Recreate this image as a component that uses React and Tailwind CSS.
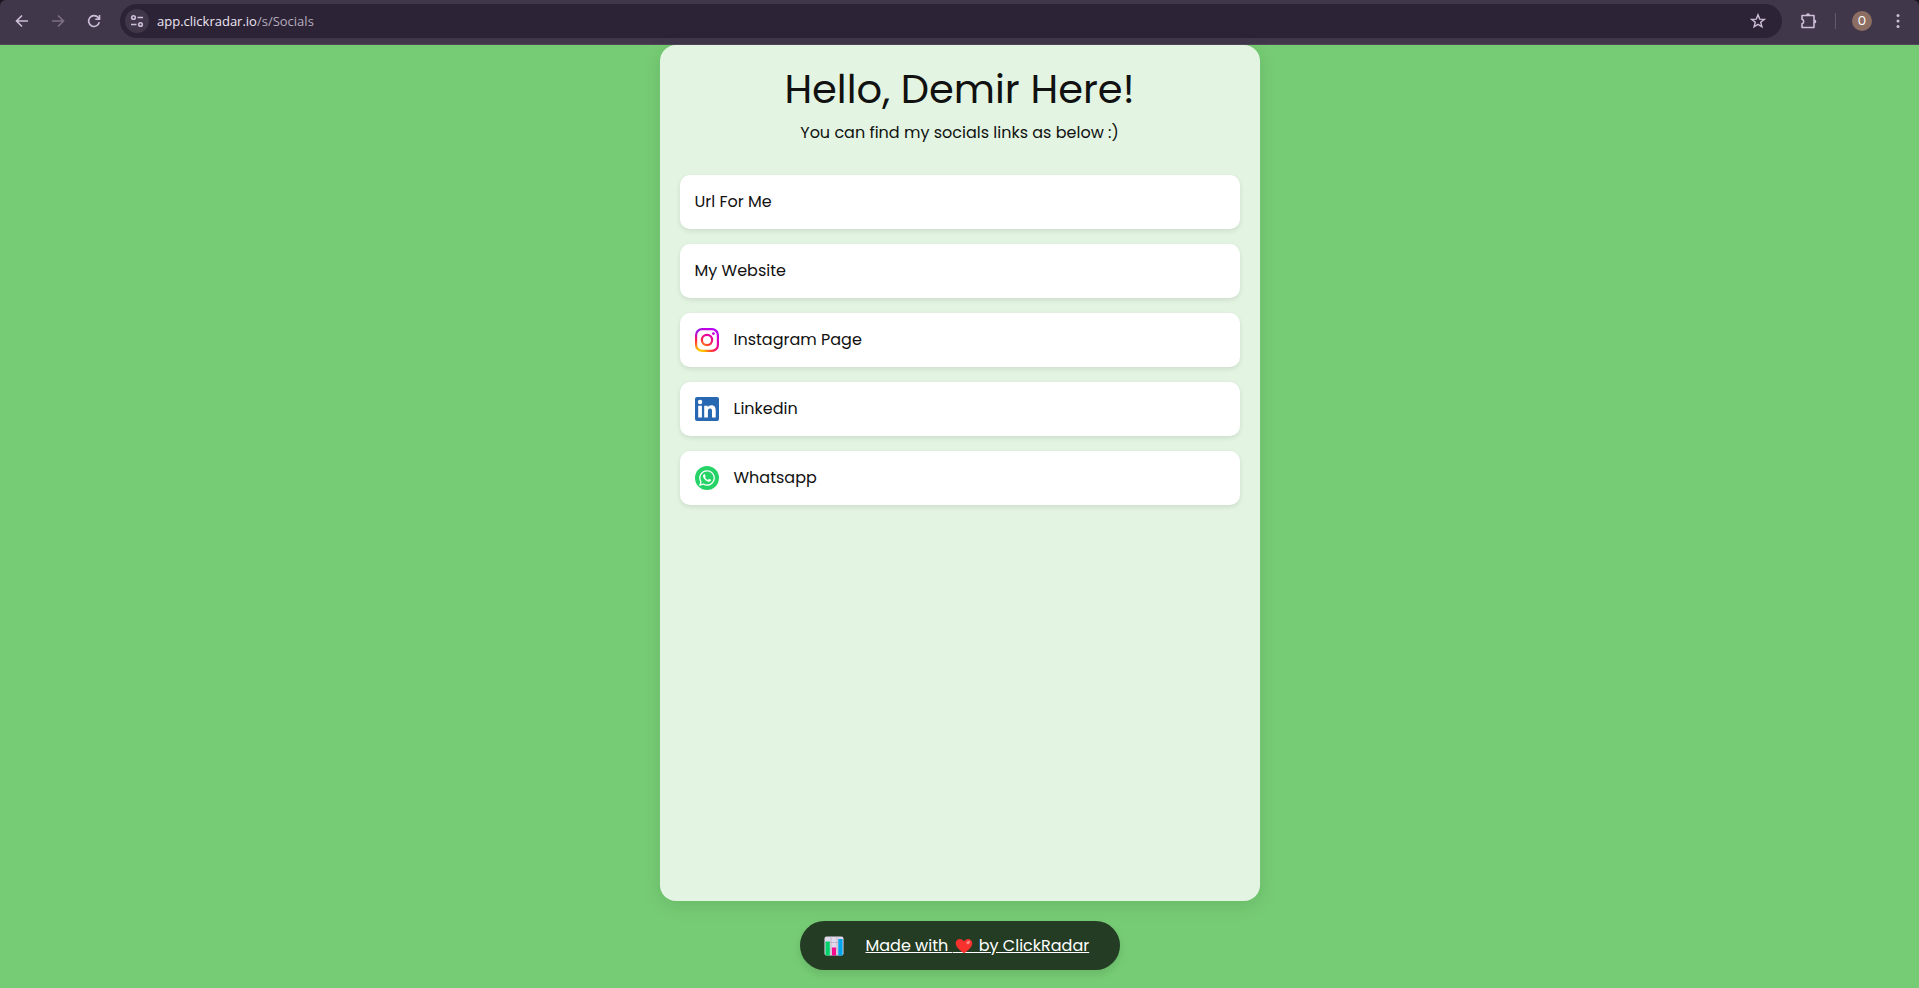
import { FaWhatsapp } from "react-icons/fa";

function InstagramIcon() {
  return (
    <svg viewBox="0 0 24 24" className="size-6 shrink-0" fill="none" aria-hidden="true">
      <defs>
        <radialGradient id="ig-warm" cx="0.2" cy="1.05" r="1.1">
          <stop offset="0" stopColor="#ffdd00" />
          <stop offset="0.18" stopColor="#ffb800" />
          <stop offset="0.5" stopColor="#ff2d3c" />
          <stop offset="0.75" stopColor="#e800a0" />
          <stop offset="1" stopColor="#b900f0" />
        </radialGradient>
        <radialGradient id="ig-cool" cx="0" cy="0" r="0.5">
          <stop offset="0" stopColor="#5a3cff" />
          <stop offset="1" stopColor="#b900f0" stopOpacity="0" />
        </radialGradient>
        <mask id="ig-shape">
          <rect x="1.1" y="1.1" width="21.8" height="21.8" rx="6" stroke="#fff" strokeWidth="2.2" />
          <circle cx="12" cy="12" r="5.1" stroke="#fff" strokeWidth="2.2" />
          <circle cx="18.4" cy="5.6" r="1.45" fill="#fff" />
        </mask>
      </defs>
      <g mask="url(#ig-shape)">
        <rect width="24" height="24" fill="url(#ig-warm)" />
        <rect width="24" height="24" fill="url(#ig-cool)" />
      </g>
    </svg>
  );
}

function LinkedinIcon() {
  return (
    <svg viewBox="0 0 24 24" className="size-6 shrink-0" aria-hidden="true">
      <rect width="24" height="24" rx="2" fill="#2867b2" />
      <circle cx="5.1" cy="5" r="2.2" fill="#fff" />
      <path
        fill="#fff"
        d="M3.2 8.7h3.7v11.8H3.2zM9.2 8.7h3.5v1.6c.6-1.1 1.9-2 3.6-2 3.7 0 4.4 2.4 4.4 5.6v6.6H17v-5.8c0-1.4 0-3.2-1.9-3.2s-2.2 1.5-2.2 3.1v5.9H9.2z"
      />
    </svg>
  );
}

function WhatsappIcon() {
  return (
    <span className="flex size-6 shrink-0 items-center justify-center rounded-full bg-[#25d366]">
      <FaWhatsapp className="size-[18px] text-white" aria-hidden="true" />
    </span>
  );
}

function ChartIcon() {
  return (
    <svg viewBox="0 0 20 20" className="size-5 shrink-0" aria-hidden="true">
      <rect x="0.5" y="0.5" width="19" height="19" rx="2" fill="#e1d8ec" />
      <path d="M0.5 6.5h19M0.5 13h19M7 .5v19M13 .5v19" stroke="#b4acbc" strokeWidth="0.7" />
      <rect x="1.5" y="5.5" width="4.3" height="14" fill="#00d26a" />
      <rect x="8" y="11.5" width="4" height="8" fill="#f70a8d" />
      <rect x="14.3" y="3" width="4.3" height="16.5" fill="#00a6ed" />
    </svg>
  );
}

function HeartIcon() {
  return (
    <svg viewBox="0 0 22 16" className="inline-block h-4 w-[22px] align-[-3px]" role="img" aria-label="love">
      <path d="M0 14.5h22" stroke="#fff" />
      <path
        fill="#f8312f"
        d="M11 15.2C8 13.200 2.700 9.500 2.700 5.200 2.700 2.800 4.600 1 6.900 1 8.700 1 10.200 2 11 3.400 11.800 2 13.300 1 15.100 1c2.300 0 4.200 1.800 4.200 4.200 0 4.300-5.300 8-8.300 10z"
      />
      <ellipse cx="15.300" cy="4.500" rx="2" ry="1.500" fill="#ff8687" transform="rotate(-35 15.300 4.500)" />
    </svg>
  );
}

const iconButton = "flex size-7 items-center justify-center rounded-full";
const stroke = { fill: "none", stroke: "currentColor", strokeWidth: 1.6 };

function BrowserBar() {
  return (
    <div className="bg-[#1c1622]">
      <header className="flex h-[45px] items-center rounded-t-md border-b border-[#52485a] bg-[#41374a] pb-0.5 pl-2 pr-[11px] text-[#cdbfd9]">
        <nav className="flex gap-2" aria-label="Browser">
          <button className={iconButton} aria-label="Back">
            <svg viewBox="0 0 16 16" className="size-4" {...stroke}>
              <path d="M14 8H3M8 2.5 2.5 8 8 13.5" />
            </svg>
          </button>
          <button className={iconButton + " text-[#7c7086]"} aria-label="Forward">
            <svg viewBox="0 0 16 16" className="size-4" {...stroke}>
              <path d="M2 8h11M8 2.5 13.5 8 8 13.5" />
            </svg>
          </button>
          <button className={iconButton} aria-label="Reload">
            <svg viewBox="0 0 16 16" className="size-4" {...stroke}>
              <path d="M13.3 9.2A5.4 5.4 0 1 1 12.2 4.6L13.5 6M13.5 2v4.200H9.300" />
            </svg>
          </button>
        </nav>
        <div className="ml-3 flex h-[34px] flex-1 items-center rounded-full bg-[#2c2336] pl-[5px] pr-4">
          <button className="flex size-6 items-center justify-center rounded-full bg-[#41374a]" aria-label="Site information">
            <svg viewBox="0 0 14 14" className="size-3.5" {...stroke}>
              <circle cx="3.5" cy="3.5" r="1.8" />
              <path d="M7.5 3.500H13M1 10.500h5.500" />
              <circle cx="10.5" cy="10.5" r="1.8" />
            </svg>
          </button>
          <p className="ml-2 flex-1 font-['Open_Sans',sans-serif] text-[13px] leading-5 text-[#b5adbd]">
            <span className="text-[#eee6f4]">app.clickradar.io</span>/s/Socials
          </p>
          <button aria-label="Bookmark this page">
            <svg viewBox="0 0 16 16" className="size-4" {...stroke} strokeWidth="1.4">
              <path d="m8 1.800 1.700 4.300 4.600.3-3.600 2.900 1.200 4.500L8 11.300l-3.900 2.500 1.200-4.500L1.700 6.400l4.600-.3z" />
            </svg>
          </button>
        </div>
        <div className="flex items-center">
          <button className="ml-[17px] flex size-5 items-center justify-center" aria-label="Extensions">
            <svg viewBox="0 0 18 18" className="size-[18px]" {...stroke}>
              <path d="M2 3.500h12v12H2v-3.700a2.400 2.400 0 0 0 0-4.600z" strokeLinejoin="round" />
              <path d="M6 3.200a2 2 0 0 1 4 0zM14.300 7.500a2 2 0 0 1 0 4z" fill="currentColor" stroke="none" />
            </svg>
          </button>
          <span className="ml-4 h-4 w-px bg-[#65596f]" />
          <button
            className="ml-4 flex size-5 items-center justify-center rounded-full bg-[#8d6e63] font-['Roboto',sans-serif] text-xs text-white"
            aria-label="Profile"
          >
            O
          </button>
          <button className="ml-4 flex size-5 items-center justify-center" aria-label="Menu">
            <svg viewBox="0 0 4 16" className="h-4 w-1" fill="currentColor">
              <circle cx="2" cy="2.5" r="1.5" />
              <circle cx="2" cy="8" r="1.5" />
              <circle cx="2" cy="13.5" r="1.5" />
            </svg>
          </button>
        </div>
      </header>
    </div>
  );
}

const links = [
  { label: "Url For Me" },
  { label: "My Website" },
  { label: "Instagram Page", Icon: InstagramIcon },
  { label: "Linkedin", Icon: LinkedinIcon },
  { label: "Whatsapp", Icon: WhatsappIcon },
];

export default function App() {
  return (
    <div className="flex min-h-screen flex-col bg-[#76cc74] font-['Poppins','Inter',sans-serif] text-[#111]">
      <BrowserBar />
      <main className="mx-auto flex w-full max-w-[600px] flex-1 flex-col rounded-2xl bg-[#e3f5e2] px-5 pt-5 shadow-[0_4px_20px_rgba(0,0,0,0.1)]">
        <h1 className="text-center text-[40px] leading-12">Hello, Demir Here!</h1>
        <p className="mt-2 text-center text-base leading-6">You can find my socials links as below :)</p>
        <ul className="mt-[30px] flex flex-col gap-[15px]">
          {links.map(({ label, Icon }) => (
            <li key={label}>
              <a
                href="#"
                className="flex h-[54px] items-center gap-[15px] rounded-[10px] bg-white px-[15px] text-base shadow-[0_2px_5px_rgba(0,0,0,0.1)]"
              >
                {Icon && <Icon />}
                {label}
              </a>
            </li>
          ))}
        </ul>
      </main>
      <footer className="flex justify-center pt-5 pb-[18px]">
        <a
          href="#"
          className="flex h-[49px] w-[320px] items-center rounded-full bg-[#243c23] px-6 text-base text-white shadow-[0_4px_8px_rgba(0,0,0,0.1)]"
        >
          <ChartIcon />
          <span className="ml-[22px] underline">
            Made with <HeartIcon /> by ClickRadar
          </span>
        </a>
      </footer>
    </div>
  );
}
